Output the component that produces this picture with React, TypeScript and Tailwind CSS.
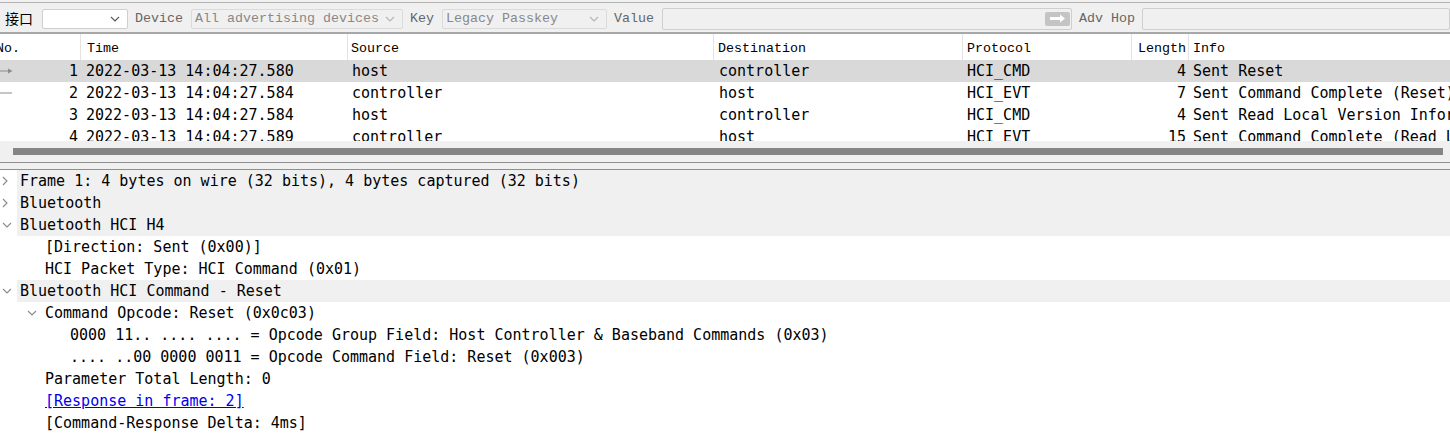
import React from "react";

/* ─── Packet list data ─── */
interface Packet {
  no: number;
  time: string;
  source: string;
  destination: string;
  protocol: string;
  length: number;
  info: string;
  mark?: "arrow" | "line";
}

const PACKETS: Packet[] = [
  { no: 1, time: "2022-03-13 14:04:27.580", source: "host", destination: "controller", protocol: "HCI_CMD", length: 4, info: "Sent Reset", mark: "arrow" },
  { no: 2, time: "2022-03-13 14:04:27.584", source: "controller", destination: "host", protocol: "HCI_EVT", length: 7, info: "Sent Command Complete (Reset)", mark: "line" },
  { no: 3, time: "2022-03-13 14:04:27.584", source: "host", destination: "controller", protocol: "HCI_CMD", length: 4, info: "Sent Read Local Version Information" },
  { no: 4, time: "2022-03-13 14:04:27.589", source: "controller", destination: "host", protocol: "HCI_EVT", length: 15, info: "Sent Command Complete (Read Local Version Information)" },
];

/* ─── Detail tree data ─── */
interface TreeRow {
  level: number;
  text: string;
  state?: "open" | "closed";
  link?: boolean;
}

const TREE: TreeRow[] = [
  { level: 0, text: "Frame 1: 4 bytes on wire (32 bits), 4 bytes captured (32 bits)", state: "closed" },
  { level: 0, text: "Bluetooth", state: "closed" },
  { level: 0, text: "Bluetooth HCI H4", state: "open" },
  { level: 1, text: "[Direction: Sent (0x00)]" },
  { level: 1, text: "HCI Packet Type: HCI Command (0x01)" },
  { level: 0, text: "Bluetooth HCI Command - Reset", state: "open" },
  { level: 1, text: "Command Opcode: Reset (0x0c03)", state: "open" },
  { level: 2, text: "0000 11.. .... .... = Opcode Group Field: Host Controller & Baseband Commands (0x03)" },
  { level: 2, text: ".... ..00 0000 0011 = Opcode Command Field: Reset (0x003)" },
  { level: 1, text: "Parameter Total Length: 0" },
  { level: 1, text: "[Response in frame: 2]", link: true },
  { level: 1, text: "[Command-Response Delta: 4ms]" },
];

const LABEL = "font-['Liberation_Mono',monospace] text-[13.33px] text-[#666]";
const CODE = "font-['DejaVu_Sans_Mono',monospace] text-[15px] text-black";

function Chevron({ open, color = "#8a8a8a" }: { open: boolean; color?: string }) {
  return open ? (
    <svg width="10" height="6" viewBox="0 0 10 6" fill="none">
      <path d="M1 1l4 4 4-4" stroke={color} strokeWidth="1.1" />
    </svg>
  ) : (
    <svg width="6" height="10" viewBox="0 0 6 10" fill="none">
      <path d="M1 1l4 4-4 4" stroke={color} strokeWidth="1.1" />
    </svg>
  );
}

function Combo({ width, text, disabled }: { width: string; text?: string; disabled?: boolean }) {
  return (
    <div
      className={`${width} h-[20px] flex items-center justify-between pl-[3px] pr-[7px] rounded-[2px] border ${
        disabled ? "bg-[#f0f0f0] border-[#dadada]" : "bg-white border-[#cfcfcf]"
      }`}
    >
      <span className={`${LABEL} text-[#888] whitespace-nowrap`}>{text}</span>
      <Chevron open color={disabled ? "#b5b5b5" : "#555"} />
    </div>
  );
}

export default function App() {
  return (
    <div className="w-[1450px] h-[448px] overflow-hidden bg-white flex flex-col">
      {/* ─── TOOLBAR ─── */}
      <div className="h-[34px] shrink-0 bg-[#f0f0f0] pt-[2px]">
        <div className="h-[32px] border-t border-b-2 border-[#a8a8a8] border-t-[#b4b4b4] flex items-center pt-[2px]">
          <span className="ml-[5px] w-[37px] font-['Noto_Sans_CJK_SC',sans-serif] text-[14px] text-black">接口</span>
          <Combo width="w-[86px]" />
          <span className={`${LABEL} ml-[7px] w-[56px]`}>Device</span>
          <Combo width="w-[212px]" text="All advertising devices" disabled />
          <span className={`${LABEL} ml-[7px] w-[32px]`}>Key</span>
          <Combo width="w-[165px]" text="Legacy Passkey" disabled />
          <span className={`${LABEL} ml-[7px] w-[48px]`}>Value</span>
          <div className="w-[410px] h-[22px] bg-[#f0f0f0] border border-[#cfcfcf] rounded-[2px] flex items-center justify-end pr-[1px]">
            <div className="w-[25px] h-[14px] rounded-[2px] bg-[#c4c4c4] flex items-center justify-center">
              <svg width="17" height="9" viewBox="0 0 17 9">
                <path d="M1 3h10V0.5L16 4.5 11 8.5V6H1z" fill="#fff" />
              </svg>
            </div>
          </div>
          <span className={`${LABEL} ml-[7px] w-[63px]`}>Adv Hop</span>
          <div className="flex-1 h-[22px] bg-[#f0f0f0] border border-[#cfcfcf] rounded-[2px]" />
        </div>
      </div>

      {/* ─── PACKET LIST ─── */}
      <div className="h-[26px] shrink-0 flex items-center font-['Liberation_Mono',monospace] text-[13.33px] text-black whitespace-nowrap overflow-hidden">
        <div className="w-[81px] h-full flex items-center border-r border-[#e3e3e3] pt-[3px]">
          <span className="-ml-[4px]">No.</span>
        </div>
        <div className="w-[267px] h-full flex items-center border-r border-[#e3e3e3] pl-[6px] pt-[3px]">Time</div>
        <div className="w-[366px] h-full flex items-center border-r border-[#e3e3e3] pl-[3px] pt-[3px]">Source</div>
        <div className="w-[249px] h-full flex items-center border-r border-[#e3e3e3] pl-[4px] pt-[3px]">Destination</div>
        <div className="w-[169px] h-full flex items-center border-r border-[#e3e3e3] pl-[4px] pt-[3px]">Protocol</div>
        <div className="w-[57px] h-full flex items-center justify-end border-r border-[#e3e3e3] pr-[2px] pt-[3px]">Length</div>
        <div className="flex-1 h-full flex items-center pl-[4px] pt-[3px]">Info</div>
      </div>

      <div className="h-[81px] shrink-0 overflow-hidden">
        {PACKETS.map((p) => (
          <div
            key={p.no}
            className={`h-[22px] flex items-center whitespace-nowrap ${CODE} ${p.no === 1 ? "bg-[#d9d9d9]" : ""}`}
          >
            <div className="w-[81px] flex items-center justify-between pr-[3px]">
              <span className="w-[13px] flex items-center">
                {p.mark === "arrow" && (
                  <svg width="13" height="6" viewBox="0 0 13 6">
                    <path d="M0 3h9" stroke="#8c8c8c" strokeWidth="1" />
                    <path d="M8 0.5L12.5 3 8 5.5z" fill="#8c8c8c" />
                  </svg>
                )}
                {p.mark === "line" && (
                  <svg width="12" height="2" viewBox="0 0 12 2">
                    <path d="M0 1h12" stroke="#8c8c8c" strokeWidth="1" />
                  </svg>
                )}
              </span>
              <span>{p.no}</span>
            </div>
            <div className="w-[267px] pl-[5px]">{p.time}</div>
            <div className="w-[366px] pl-[4px]">{p.source}</div>
            <div className="w-[249px] pl-[5px]">{p.destination}</div>
            <div className="w-[169px] pl-[4px]">{p.protocol}</div>
            <div className="w-[57px] text-right pr-[3px]">{p.length}</div>
            <div className="flex-1 pl-[4px] overflow-hidden">{p.info}</div>
          </div>
        ))}
      </div>

      {/* horizontal scrollbar */}
      <div className="h-[21px] shrink-0 bg-[#f0f0f0] pt-[7px] pl-[13px] pr-[7px]">
        <div className="h-[7px] bg-[#858585]" />
      </div>

      {/* splitter */}
      <div className="h-[8px] shrink-0 bg-[#f0f0f0] border-t border-b border-[#8e8e8e]" />

      {/* ─── DETAIL TREE ─── */}
      <div className="flex-1">
        {TREE.map((row, i) => (
          <div key={i} className={`h-[22px] flex items-center whitespace-nowrap ${CODE}`} style={{ paddingLeft: row.level * 25 }}>
            <div className="w-[17px] h-full flex items-center pl-[2px]">
              {row.state && <Chevron open={row.state === "open"} />}
            </div>
            <div className={`flex-1 h-full flex items-center pl-[3px] pt-[1px] ${row.level === 0 ? "bg-[#f0f0f0]" : ""}`}>
              {row.link ? <span className="text-[#0000ee] underline">{row.text}</span> : row.text}
            </div>
          </div>
        ))}
      </div>
    </div>
  );
}
